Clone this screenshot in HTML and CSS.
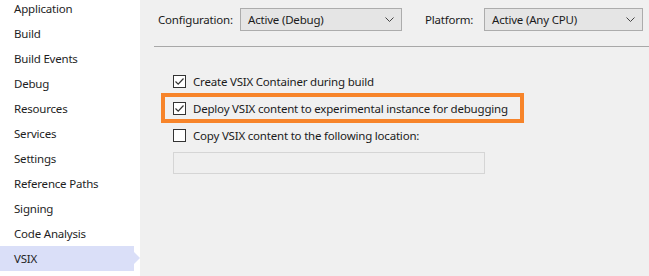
FILE: index.html
```html
<!DOCTYPE html>
<html>
<head>
<meta charset="utf-8">
<link rel="stylesheet" href="styles.css">
</head>
<body>
<div class="app">
  <nav class="sidebar">
    <div class="item">Application</div>
    <div class="item">Build</div>
    <div class="item">Build Events</div>
    <div class="item">Debug</div>
    <div class="item">Resources</div>
    <div class="item">Services</div>
    <div class="item">Settings</div>
    <div class="item">Reference Paths</div>
    <div class="item">Signing</div>
    <div class="item">Code Analysis</div>
    <div class="item selected">VSIX</div>
  </nav>
  <main class="main">
    <div class="toolbar">
      <span class="label">Configuration:</span>
      <div class="select cfg"><span>Active (Debug)</span><svg class="chev" width="9" height="5" viewBox="0 0 9 5"><path d="M0.5 0.5 L4.5 4.5 L8.5 0.5" fill="none" stroke="#444" stroke-width="1"/></svg></div>
      <span class="label plat-label">Platform:</span>
      <div class="select plat"><span>Active (Any CPU)</span><svg class="chev" width="9" height="5" viewBox="0 0 9 5"><path d="M0.5 0.5 L4.5 4.5 L8.5 0.5" fill="none" stroke="#444" stroke-width="1"/></svg></div>
    </div>
    <div class="sep"></div>
    <div class="options">
      <div class="opt first">
        <span class="cb"><svg width="11" height="11" viewBox="0 0 11 11"><path d="M1.5 5.5 L4.2 8.2 L9.5 2.5" fill="none" stroke="#333" stroke-width="1.2"/></svg></span>
        <span>Create VSIX Container during build</span>
      </div>
      <div class="opt highlight">
        <span class="cb"><svg width="11" height="11" viewBox="0 0 11 11"><path d="M1.5 5.5 L4.2 8.2 L9.5 2.5" fill="none" stroke="#333" stroke-width="1.2"/></svg></span>
        <span>Deploy VSIX content to experimental instance for debugging</span>
      </div>
      <div class="opt third">
        <span class="cb"></span>
        <span>Copy VSIX content to the following location:</span>
      </div>
      <div class="textbox"></div>
    </div>
  </main>
</div>
</body>
</html>
```
FILE: styles.css
```css
html, body {
  margin: 0;
  padding: 0;
}
body {
  width: 649px;
  height: 276px;
  overflow: hidden;
  background: #f0f0f0;
  font-family: "Noto Sans", "Open Sans", sans-serif;
  font-size: 11.5px;
  letter-spacing: -0.2px;
  color: #1b1b1b;
  white-space: nowrap;
}
.app {
  display: flex;
  height: 276px;
}
.sidebar {
  width: 140px;
  flex: none;
  background: #ffffff;
  display: flex;
  flex-direction: column;
}
.sidebar .item {
  height: 25px;
  line-height: 25px;
  padding-left: 14px;
  position: relative;
  width: 120px;
  color: #1e1e1e;
}
.sidebar .item:first-child {
  margin-top: -4px;
}
.sidebar .selected {
  background: #dadff8;
}
.sidebar .selected::after {
  content: "";
  position: absolute;
  left: 134px;
  top: 6px;
  border-left: 6px solid #dadff8;
  border-top: 6.5px solid transparent;
  border-bottom: 6.5px solid transparent;
}
.main {
  flex: 1;
  display: flex;
  flex-direction: column;
}
.toolbar {
  display: flex;
  align-items: center;
  height: 23px;
  margin-top: 8px;
  padding-left: 18px;
}
.label {
  width: 82px;
  flex: none;
}
.plat-label {
  margin-left: 23px;
  width: 59px;
}
.select {
  height: 21px;
  border: 1px solid #acacac;
  background: #e5e5e5;
  display: flex;
  align-items: center;
  padding-left: 7px;
}
.select span {
  flex: 1;
}
.chev {
  margin-right: 7px;
}
.cfg {
  width: 153px;
}
.plat {
  width: 150px;
}
.sep {
  height: 1px;
  background: #a8a8a8;
  margin: 15px 0 0 14px;
}
.options {
  display: flex;
  flex-direction: column;
  margin-top: 23px;
}
.opt {
  display: flex;
  align-items: center;
  padding-left: 33px;
  gap: 7px;
}
.first {
  height: 23px;
}
.third {
  height: 24px;
}
.cb {
  width: 11px;
  height: 11px;
  border: 1px solid #333;
  background: #fff;
  display: flex;
  flex: none;
}
.highlight {
  box-sizing: border-box;
  height: 30px;
  width: 363px;
  border: 4px solid #f7842a;
  margin-left: 21px;
  padding-left: 8px;
}
.textbox {
  margin-left: 33px;
  margin-top: 5px;
  width: 310px;
  height: 20px;
  border: 1px solid #d5d5d5;
  background: #efefef;
}
```
